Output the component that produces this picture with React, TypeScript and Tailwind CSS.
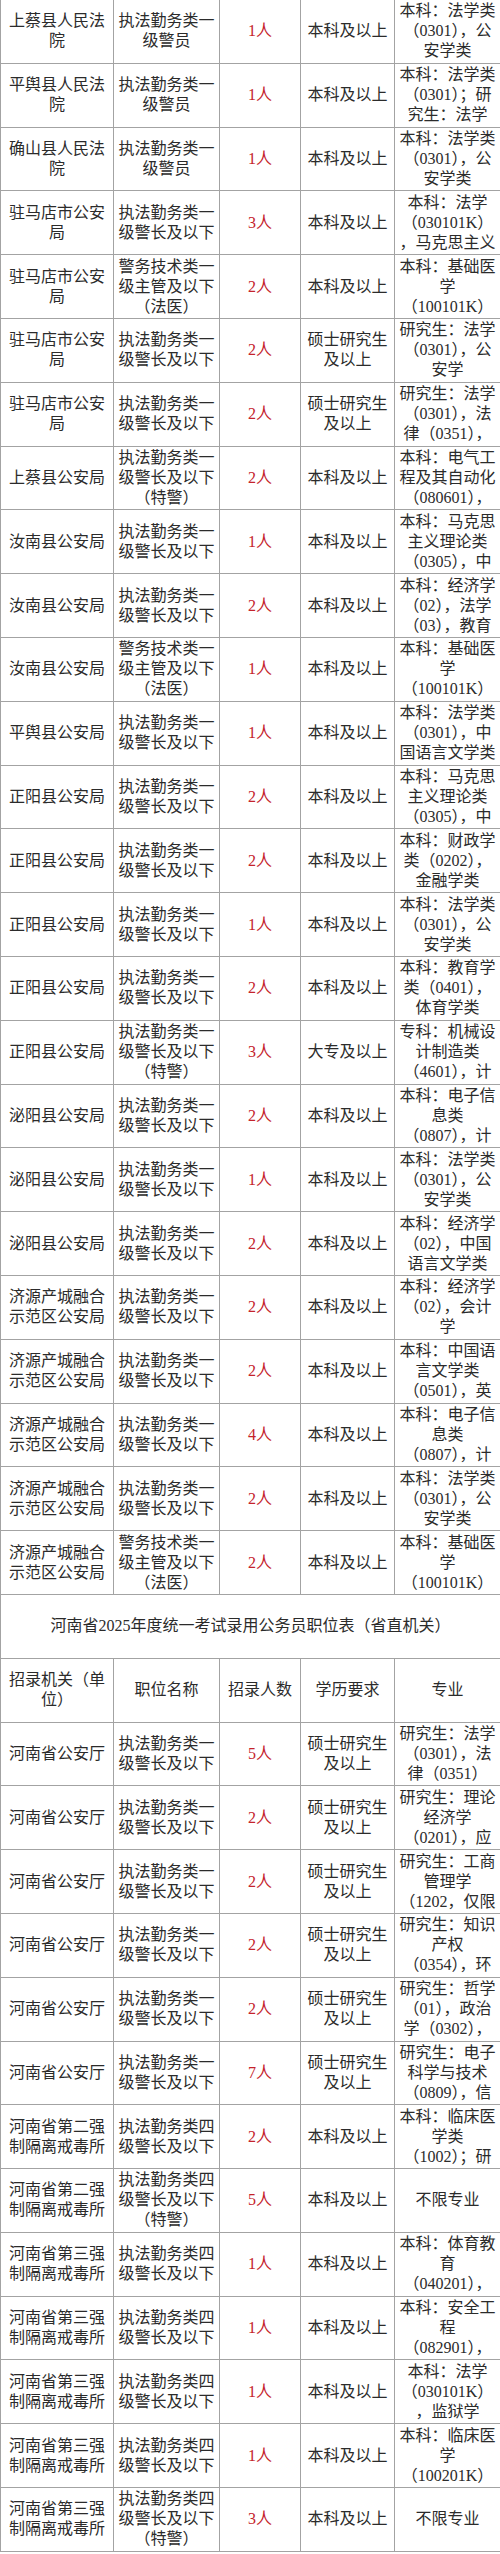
import React from "react";

type Row = [string[], string[], string, string[], string[]];

const ZF = ["执法勤务类一", "级警长及以下"];
const ZF_TJ = ["执法勤务类一", "级警长及以下", "（特警）"];
const FY = ["警务技术类一", "级主管及以下", "（法医）"];
const SI = ["执法勤务类四", "级警长及以下"];
const SI_TJ = ["执法勤务类四", "级警长及以下", "（特警）"];
const BK = ["本科及以上"];
const SS = ["硕士研究生", "及以上"];
const ZMD = ["驻马店市公安", "局"];
const JY = ["济源产城融合", "示范区公安局"];
const HNGA = ["河南省公安厅"];
const ER = ["河南省第二强", "制隔离戒毒所"];
const SAN = ["河南省第三强", "制隔离戒毒所"];

const table1: Row[] = [
  [["上蔡县人民法", "院"], ["执法勤务类一", "级警员"], "1人", BK, ["本科：法学类", "（0301），公", "安学类"]],
  [["平舆县人民法", "院"], ["执法勤务类一", "级警员"], "1人", BK, ["本科：法学类", "（0301）；研", "究生：法学"]],
  [["确山县人民法", "院"], ["执法勤务类一", "级警员"], "1人", BK, ["本科：法学类", "（0301），公", "安学类"]],
  [ZMD, ZF, "3人", BK, ["本科：法学", "（030101K）", "，马克思主义"]],
  [ZMD, FY, "2人", BK, ["本科：基础医", "学", "（100101K）"]],
  [ZMD, ZF, "2人", SS, ["研究生：法学", "（0301），公", "安学"]],
  [ZMD, ZF, "2人", SS, ["研究生：法学", "（0301），法", "律（0351），"]],
  [["上蔡县公安局"], ZF_TJ, "2人", BK, ["本科：电气工", "程及其自动化", "（080601），"]],
  [["汝南县公安局"], ZF, "1人", BK, ["本科：马克思", "主义理论类", "（0305），中"]],
  [["汝南县公安局"], ZF, "2人", BK, ["本科：经济学", "（02），法学", "（03），教育"]],
  [["汝南县公安局"], FY, "1人", BK, ["本科：基础医", "学", "（100101K）"]],
  [["平舆县公安局"], ZF, "1人", BK, ["本科：法学类", "（0301），中", "国语言文学类"]],
  [["正阳县公安局"], ZF, "2人", BK, ["本科：马克思", "主义理论类", "（0305），中"]],
  [["正阳县公安局"], ZF, "2人", BK, ["本科：财政学", "类（0202），", "金融学类"]],
  [["正阳县公安局"], ZF, "1人", BK, ["本科：法学类", "（0301），公", "安学类"]],
  [["正阳县公安局"], ZF, "2人", BK, ["本科：教育学", "类（0401），", "体育学类"]],
  [["正阳县公安局"], ZF_TJ, "3人", ["大专及以上"], ["专科：机械设", "计制造类", "（4601），计"]],
  [["泌阳县公安局"], ZF, "2人", BK, ["本科：电子信", "息类", "（0807），计"]],
  [["泌阳县公安局"], ZF, "1人", BK, ["本科：法学类", "（0301），公", "安学类"]],
  [["泌阳县公安局"], ZF, "2人", BK, ["本科：经济学", "（02），中国", "语言文学类"]],
  [JY, ZF, "2人", BK, ["本科：经济学", "（02），会计", "学"]],
  [JY, ZF, "2人", BK, ["本科：中国语", "言文学类", "（0501），英"]],
  [JY, ZF, "4人", BK, ["本科：电子信", "息类", "（0807），计"]],
  [JY, ZF, "2人", BK, ["本科：法学类", "（0301），公", "安学类"]],
  [JY, FY, "2人", BK, ["本科：基础医", "学", "（100101K）"]],
];

const table2: Row[] = [
  [HNGA, ZF, "5人", SS, ["研究生：法学", "（0301），法", "律（0351）"]],
  [HNGA, ZF, "2人", SS, ["研究生：理论", "经济学", "（0201），应"]],
  [HNGA, ZF, "2人", SS, ["研究生：工商", "管理学", "（1202，仅限"]],
  [HNGA, ZF, "2人", SS, ["研究生：知识", "产权", "（0354），环"]],
  [HNGA, ZF, "2人", SS, ["研究生：哲学", "（01），政治", "学（0302），"]],
  [HNGA, ZF, "7人", SS, ["研究生：电子", "科学与技术", "（0809），信"]],
  [ER, SI, "2人", BK, ["本科：临床医", "学类", "（1002）；研"]],
  [ER, SI_TJ, "5人", BK, ["不限专业"]],
  [SAN, SI, "1人", BK, ["本科：体育教", "育", "（040201），"]],
  [SAN, SI, "1人", BK, ["本科：安全工", "程", "（082901），"]],
  [SAN, SI, "1人", BK, ["本科：法学", "（030101K）", "，监狱学"]],
  [SAN, SI, "1人", BK, ["本科：临床医", "学", "（100201K）"]],
  [SAN, SI_TJ, "3人", BK, ["不限专业"]],
];

function Lines({ lines }: { lines: string[] }) {
  return (
    <div className="flex flex-col items-center">
      {lines.map((l, i) => (
        <span key={i} className="whitespace-nowrap">
          {l}
        </span>
      ))}
    </div>
  );
}

const cell =
  "h-[63.8px] flex items-center justify-center text-center overflow-hidden border-r border-b border-[#a3a3a3]";

function DataRow({ row }: { row: Row }) {
  const [org, pos, num, edu, major] = row;
  return (
    <>
      <div className={cell}>
        <Lines lines={org} />
      </div>
      <div className={cell}>
        <Lines lines={pos} />
      </div>
      <div className={cell + " text-[#c4232b]"}>{num}</div>
      <div className={cell}>
        <Lines lines={edu} />
      </div>
      <div className={cell}>
        <Lines lines={major} />
      </div>
    </>
  );
}

export default function App() {
  return (
    <div className="w-[500px] bg-white text-[#2b2b2b] text-[16px] leading-[20px] font-['Liberation_Serif','Noto_Sans_CJK_SC',serif]">
      <div className="grid grid-cols-[113px_106px_81px_94px_106px] border-l border-[#a3a3a3]">
        {table1.map((r, i) => (
          <DataRow key={"a" + i} row={r} />
        ))}
        <div className={cell + " col-span-5"}>
          河南省2025年度统一考试录用公务员职位表（省直机关）
        </div>
        <div className={cell}>
          <Lines lines={["招录机关（单", "位）"]} />
        </div>
        <div className={cell}>职位名称</div>
        <div className={cell}>招录人数</div>
        <div className={cell}>学历要求</div>
        <div className={cell}>专业</div>
        {table2.map((r, i) => (
          <DataRow key={"b" + i} row={r} />
        ))}
      </div>
    </div>
  );
}
